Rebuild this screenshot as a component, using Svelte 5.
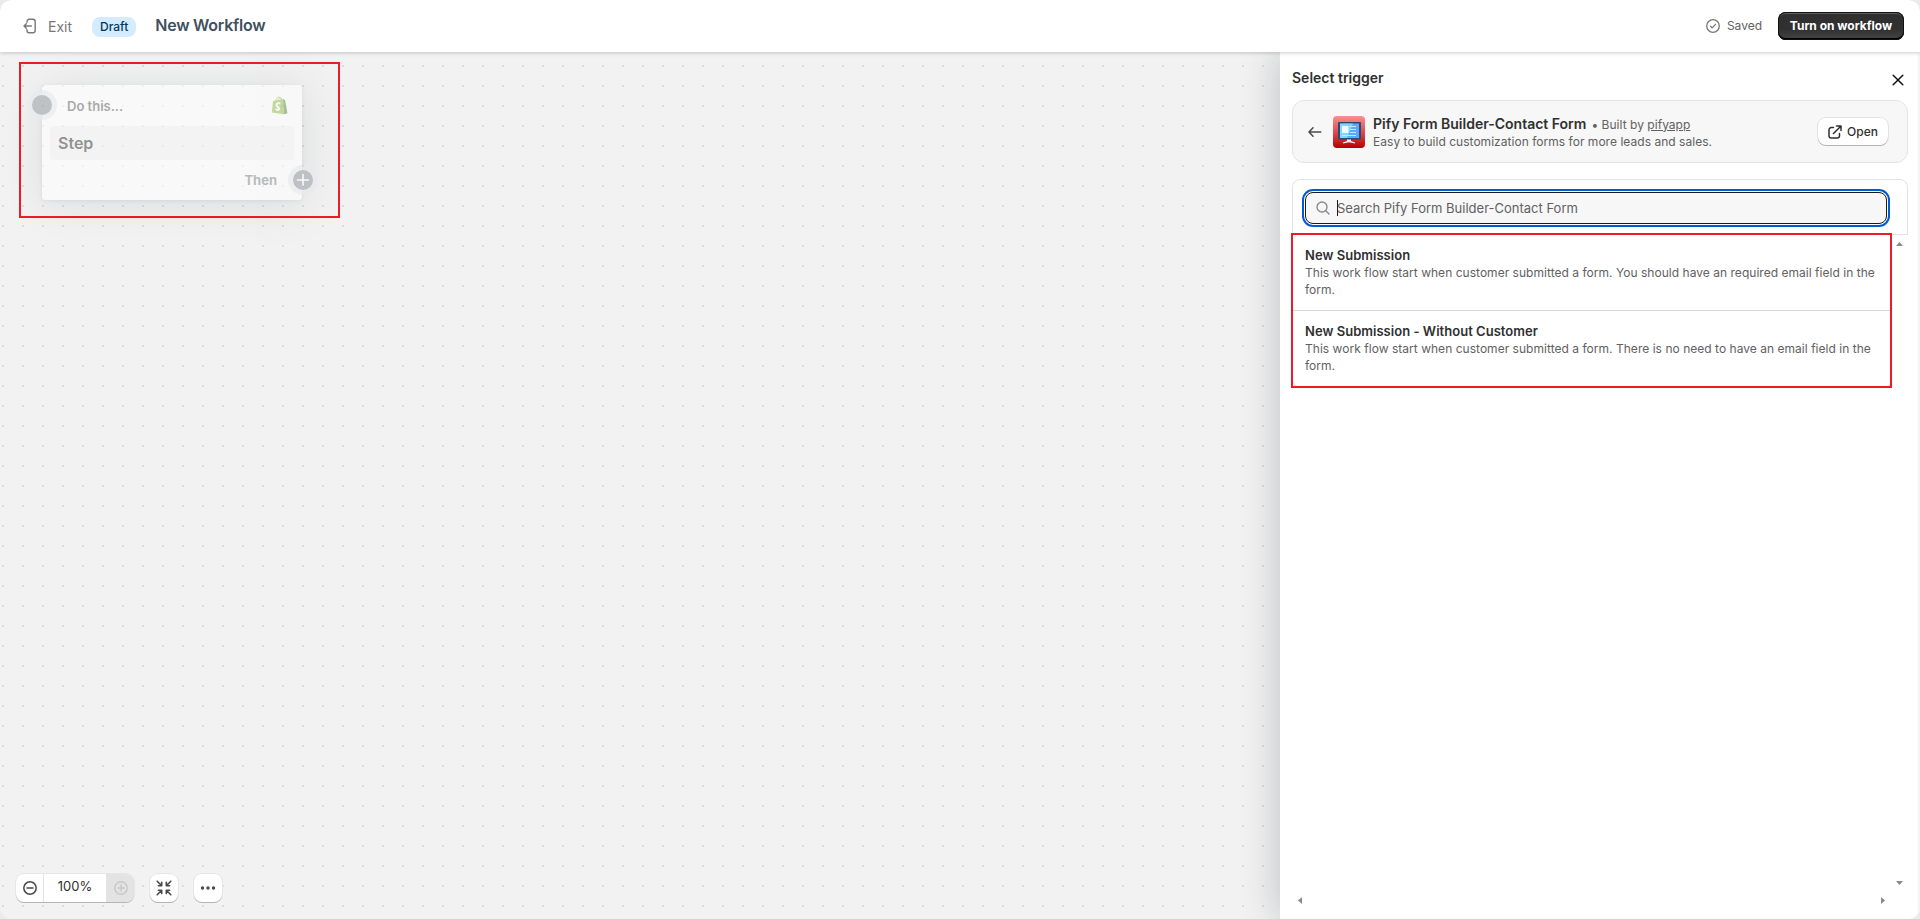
<script lang="ts">
	let zoom = $state(100);
	let query = $state('');

	const app = {
		name: 'Pify Form Builder-Contact Form',
		author: 'pifyapp',
		tagline: 'Easy to build customization forms for more leads and sales.'
	};

	const triggers = [
		{
			title: 'New Submission',
			body: 'This work flow start when customer submitted a form. You should have an required email field in the form.'
		},
		{
			title: 'New Submission - Without Customer',
			body: 'This work flow start when customer submitted a form. There is no need to have an email field in the form.'
		}
	];
</script>

<div class="page">
	<header class="topbar">
		<a class="exit" href="#exit">
			<svg width="14" height="16" viewBox="0 0 14 16" fill="none" stroke="currentColor" stroke-width="1.4" stroke-linecap="round" stroke-linejoin="round">
				<path d="M4 4.2V3.6a2.3 2.3 0 0 1 2.3-2.3h3.6a2.3 2.3 0 0 1 2.3 2.3v8.8a2.3 2.3 0 0 1-2.3 2.3H6.3a2.3 2.3 0 0 1-2.3-2.3v-.6M8.3 8H1M3.3 5.7 1 8l2.3 2.3" />
			</svg>
			<span>Exit</span>
		</a>
		<span class="badge">Draft</span>
		<h1>New Workflow</h1>
		<div class="saved">
			<svg width="14" height="14" viewBox="0 0 14 14" fill="none" stroke="currentColor" stroke-width="1.3" stroke-linecap="round" stroke-linejoin="round">
				<circle cx="7" cy="7" r="6.3" />
				<path d="m4.6 7.3 1.6 1.6 3.3-3.5" />
			</svg>
			<span>Saved</span>
		</div>
		<button class="primary">Turn on workflow</button>
	</header>

	<div class="workspace">
		<main class="canvas">
			<div class="node">
				<span class="port in"></span>
				<div class="node-head">
					<span>Do this...</span>
					<svg width="17" height="19" viewBox="0 0 17 19">
						<path d="m.8 16.6 1.3-11.5 9.9-2.1 1 15.300z" fill="#95bf47" />
						<path d="m12 3 2 .9 2.500 13.400-3.500 1z" fill="#5e8e3e" />
						<path d="M4.500 5.500C5 2.500 6.500.9 8 1c1.400.1 2 1.600 2.100 3.300M7 5c.2-2.300 1.300-3.600 2.500-3.200 1 .3 1.500 1.200 1.700 2" fill="none" stroke="#95bf47" stroke-width=".9" />
						<path d="M9.300 7.600C7.500 6.600 5.300 7.300 5.500 9.200c.2 1.700 2.800 1.800 2.700 3.600-.1 1.600-2.100 1.500-3.600.3" fill="none" stroke="#fff" stroke-width="1.9" />
					</svg>
				</div>
				<div class="node-body">Step</div>
				<div class="node-foot">Then</div>
				<span class="port out">
					<svg width="14" height="14" viewBox="0 0 14 14" stroke="#fff" stroke-width="1.6" stroke-linecap="round">
						<path d="M7 1.500v11M1.500 7h11" />
					</svg>
				</span>
			</div>
			<div class="frame frame-node"></div>

			<div class="tools">
				<div class="zoom">
					<button aria-label="Zoom out" onclick={() => { zoom -= 10; }}>
						<svg width="14" height="14" viewBox="0 0 14 14" fill="none" stroke="currentColor" stroke-width="1.5" stroke-linecap="round">
							<circle cx="7" cy="7" r="6.2" />
							<path d="M4 7h6" />
						</svg>
					</button>
					<span class="level">{zoom}%</span>
					<button class="off" aria-label="Zoom in" disabled={zoom >= 100} onclick={() => { zoom += 10; }}>
						<svg width="14" height="14" viewBox="0 0 14 14" fill="none" stroke="currentColor" stroke-width="1.4" stroke-linecap="round">
							<circle cx="7" cy="7" r="6.2" />
							<path d="M4 7h6M7 4v6" />
						</svg>
					</button>
				</div>
				<button class="tool" aria-label="Fit to screen">
					<svg width="16" height="16" viewBox="0 0 16 16" fill="none" stroke="currentColor" stroke-width="1.6" stroke-linecap="round" stroke-linejoin="round">
						<path d="m1.200 1.200 4 4M5.700 2.400v3.300H2.400M14.800 1.200l-4 4M10.300 2.400v3.300h3.300M1.200 14.800l4-4M5.700 13.600v-3.300H2.400M14.800 14.800l-4-4M10.300 13.600v-3.300h3.300" />
					</svg>
				</button>
				<button class="tool" aria-label="More actions">
					<svg width="16" height="16" viewBox="0 0 16 16" fill="currentColor">
						<circle cx="2.5" cy="8" r="1.7" />
						<circle cx="8" cy="8" r="1.7" />
						<circle cx="13.5" cy="8" r="1.7" />
					</svg>
				</button>
			</div>
		</main>

		<aside class="panel">
			<div class="panel-head">
				<h2>Select trigger</h2>
				<button class="close" aria-label="Close">
					<svg width="12" height="12" viewBox="0 0 12 12" stroke="currentColor" stroke-width="1.5" stroke-linecap="round">
						<path d="m1.200 1.200 9.600 9.600M10.800 1.200l-9.600 9.600" />
					</svg>
				</button>
			</div>

			<section class="app-card">
				<svg class="back" width="14" height="12" viewBox="0 0 14 12" fill="none" stroke="currentColor" stroke-width="1.5" stroke-linecap="round" stroke-linejoin="round">
					<path d="M12.800 6H1.200M5 1.800 1 6l4 4.200" />
				</svg>
				<svg class="logo" width="32" height="32" viewBox="0 0 32 32">
					<defs>
						<linearGradient id="red" x1="0" y1="0" x2="0" y2="1">
							<stop offset="0" stop-color="#f98f8f" />
							<stop offset=".55" stop-color="#d94548" />
							<stop offset="1" stop-color="#b80000" />
						</linearGradient>
					</defs>
					<rect width="32" height="32" rx="4" fill="url(#red)" />
					<rect x="5" y="6" width="23" height="17.5" rx="1" fill="#2f4779" />
					<rect x="7" y="7.5" width="19" height="14.5" fill="#5aa9ff" />
					<path d="M7 7.500h13l-6 14.500H7z" fill="#73dcff" />
					<path d="M9 10h6.500v7H9z" fill="#f4fbff" />
					<path d="M17 10.500h6M17 13.500h6M17 16.500h6M9 19.500h14" stroke="#c4e6ff" stroke-width="1" />
					<path d="M14 23.500h4v1.500l4 1.500v1L16 26.200l-6 1.300v-1l4-1.500z" fill="#e9edf5" />
				</svg>
				<div class="app-text">
					<div class="app-title">
						<strong>{app.name}</strong>
						<span>• Built by <u>{app.author}</u></span>
					</div>
					<p>{app.tagline}</p>
				</div>
				<button class="open">
					<svg width="14" height="14" viewBox="0 0 14 14" fill="none" stroke="currentColor" stroke-width="1.5" stroke-linecap="round" stroke-linejoin="round">
						<path d="M5.500 2.500H3.300A2.300 2.300 0 0 0 1 4.800v5.900A2.300 2.300 0 0 0 3.300 13h5.900a2.300 2.300 0 0 0 2.300-2.300V8.500M8.500 1H13v4.500M13 1 5.500 8.500" />
					</svg>
					<span>Open</span>
				</button>
			</section>

			<section class="search-card">
				<label class="search">
					<svg width="14" height="14" viewBox="0 0 14 14" fill="none" stroke="#8a8a8a" stroke-width="1.4" stroke-linecap="round">
						<circle cx="6" cy="6" r="5" />
						<path d="m9.700 9.700 3.300 3.300" />
					</svg>
					<span class="caret"></span>
					<input type="text" placeholder={`Search ${app.name}`} bind:value={query} />
				</label>
			</section>

			<div class="results">
				<ul class="list">
					{#each triggers as trigger}
						<li>
							<strong>{trigger.title}</strong>
							<p>{trigger.body}</p>
						</li>
					{/each}
				</ul>
				<div class="bar-y">
					<svg width="7" height="4" viewBox="0 0 7 4"><path d="M3.500 0 7 4H0z" /></svg>
					<svg width="7" height="4" viewBox="0 0 7 4"><path d="M0 0h7L3.500 4z" /></svg>
				</div>
			</div>
			<div class="bar-x">
				<svg width="4" height="7" viewBox="0 0 4 7"><path d="M4 0v7L0 3.500z" /></svg>
				<svg width="4" height="7" viewBox="0 0 4 7"><path d="M0 0v7l4-3.500z" /></svg>
			</div>
			<div class="frame frame-list"></div>
		</aside>
	</div>
</div>

<style>
	:global(body) {
		background: #ebebeb;
	}

	.page {
		display: flex;
		flex-direction: column;
		height: 100vh;
		overflow: hidden;
		border-radius: 12px;
		background: #f2f2f2;
		color: #303030;
		font-family: Inter, 'Liberation Sans', sans-serif;
		font-size: 13px;
	}

	.page * {
		box-sizing: border-box;
	}

	h1,
	h2,
	p,
	ul {
		margin: 0;
		padding: 0;
	}

	button {
		display: flex;
		align-items: center;
		justify-content: center;
		padding: 0;
		border: none;
		background: none;
		color: inherit;
		font: inherit;
	}

	svg {
		display: block;
		flex-shrink: 0;
	}

	.topbar {
		position: relative;
		z-index: 2;
		display: flex;
		align-items: center;
		flex-shrink: 0;
		height: 52px;
		padding: 0 16px 0 23px;
		background: #fff;
		box-shadow: 0 1px 4px rgba(0, 0, 0, 0.2);
	}

	.exit {
		display: flex;
		align-items: center;
		gap: 11px;
		width: 69px;
		color: #777;
		font-size: 14px;
		text-decoration: none;
	}

	.exit span {
		padding-top: 1px;
	}

	.badge {
		height: 20px;
		margin-top: 2px;
		padding: 0 8px;
		border-radius: 8px;
		background: #d5ebff;
		color: #003a5a;
		font-size: 12px;
		font-weight: 500;
		line-height: 20px;
	}

	h1 {
		margin: 0 auto 2px 19px;
		color: #414f5e;
		font-size: 16px;
		font-weight: 600;
		letter-spacing: -0.25px;
		line-height: 20px;
	}

	.saved {
		display: flex;
		align-items: center;
		gap: 7px;
		color: #616161;
		font-size: 12px;
	}

	.saved span {
		padding-bottom: 1px;
	}

	.saved svg {
		color: #777;
	}

	.primary {
		width: 126px;
		height: 28px;
		margin-left: 16px;
		padding-bottom: 1px;
		border-radius: 8px;
		background: linear-gradient(#303030 60%, #454545);
		box-shadow: inset 0 0 0 1px #111, inset 0 2px 0 #606060, inset 0 -2px 0 #000;
		color: #fff;
		font-size: 12px;
		font-weight: 700;
	}

	.workspace {
		display: flex;
		flex: 1;
		min-height: 0;
	}

	.canvas {
		position: relative;
		display: flex;
		flex: 1;
		align-items: flex-end;
		background: radial-gradient(circle at 10px 10px, #dcdee0 1px, transparent 1.4px) -7px 4px / 20px 20px #f2f2f2;
	}

	.node {
		position: absolute;
		top: 33px;
		left: 42px;
		width: 260px;
		height: 115px;
		padding: 0 8px;
		border-radius: 3px;
		background: #fff;
		box-shadow: 0 4px 40px rgba(33, 43, 54, 0.22), 0 1px 4px rgba(33, 43, 54, 0.15);
		opacity: 0.5;
	}

	.node-head {
		display: flex;
		align-items: center;
		justify-content: space-between;
		height: 41px;
		padding: 0 6px 0 17px;
		color: #616161;
		font-weight: 600;
	}

	.node-body {
		height: 34px;
		padding-left: 8px;
		border-radius: 4px;
		background: #f4f4f4;
		font-size: 16px;
		font-weight: 600;
		line-height: 35px;
	}

	.node-foot {
		height: 40px;
		padding-right: 17px;
		color: #7f8489;
		font-weight: 700;
		line-height: 41px;
		text-align: right;
	}

	.port {
		position: absolute;
		display: flex;
		align-items: center;
		justify-content: center;
		width: 20px;
		height: 20px;
		border-radius: 50%;
		background: #8c9196;
		box-shadow: 0 0 0 5px rgba(223, 227, 232, 0.7);
	}

	.in {
		top: 10px;
		left: -10px;
	}

	.out {
		top: 85px;
		right: -11px;
	}

	.frame {
		position: absolute;
		border: 2px solid #ed1c24;
		pointer-events: none;
	}

	.frame-node {
		top: 10px;
		left: 19px;
		width: 321px;
		height: 156px;
	}

	.frame-list {
		top: 181px;
		left: 11px;
		width: 601px;
		height: 155px;
	}

	.tools {
		display: flex;
		gap: 16px;
		padding: 0 0 17px 16px;
		color: #4a4a4a;
	}

	.zoom {
		display: flex;
		width: 118px;
		height: 28px;
		overflow: hidden;
		border-radius: 8px;
		background: #fff;
		box-shadow: 0 1px 0 #b5b5b5, 0 0 0 1px #e6e6e6;
	}

	.zoom button {
		width: 27px;
	}

	.zoom .off {
		width: 27px;
		background: #e3e3e3;
		color: #c8c8c8;
	}

	.level {
		flex: 1;
		border: solid #e3e3e3;
		border-width: 0 1px;
		color: #303030;
		font-size: 13px;
		line-height: 25px;
		text-align: center;
	}

	.tool {
		width: 28px;
		height: 28px;
		border-radius: 8px;
		background: #fff;
		box-shadow: 0 1px 0 #b5b5b5, 0 0 0 1px #e6e6e6;
	}

	.panel {
		position: relative;
		z-index: 1;
		display: flex;
		flex-direction: column;
		width: 640px;
		padding: 0 12px;
		background: #fff;
		box-shadow: -2px 0 36px rgba(33, 43, 54, 0.24), inset -2px 0 2px #f3f3f3;
	}

	.panel-head {
		display: flex;
		align-items: center;
		justify-content: space-between;
		height: 48px;
		padding: 4px 4px 0 0;
	}

	h2 {
		font-size: 14px;
		font-weight: 600;
		line-height: 20px;
	}

	.close {
		padding-top: 4px;
		color: #111;
	}

	.app-card {
		display: flex;
		align-items: center;
		height: 63px;
		padding: 0 19px 0 15px;
		border: 1px solid #e3e3e3;
		border-radius: 12px;
		background: #f7f7f7;
	}

	.back {
		color: #4a4a4a;
	}

	.logo {
		margin: 0 8px 0 11px;
	}

	.app-text {
		flex: 1;
		color: #616161;
		font-size: 12px;
		letter-spacing: 0.03px;
		line-height: 17px;
	}

	.app-title {
		display: flex;
		align-items: baseline;
		gap: 5px;
		padding-top: 1px;
		line-height: 17px;
	}

	.app-title strong {
		color: #303030;
		font-size: 14px;
		font-weight: 600;
		letter-spacing: 0;
	}

	.app-title span {
		margin-top: -1px;
	}

	.open {
		gap: 5px;
		width: 70px;
		height: 27px;
		border-radius: 8px;
		background: #fff;
		box-shadow: 0 1px 0 #b5b5b5, 0 0 0 1px #e3e3e3;
		font-size: 12px;
		font-weight: 500;
	}

	.search-card {
		height: 56px;
		margin-top: 16px;
		padding: 12px 20px 0 12px;
		border: 1px solid #e3e3e3;
		border-radius: 8px 8px 0 0;
	}

	.search {
		display: flex;
		align-items: center;
		height: 32px;
		padding: 0 10px;
		border: 1px solid #1a1a1a;
		border-radius: 8px;
		background: #f7f7f7;
		outline: 2px solid #005bd3;
		outline-offset: 1px;
	}

	.caret {
		width: 1px;
		height: 16px;
		margin-left: 7px;
		background: #1a1a1a;
	}

	input {
		flex: 1;
		margin-left: -1px;
		padding: 0;
		border: none;
		outline: none;
		background: none;
		font: inherit;
	}

	input::placeholder {
		color: #616161;
		opacity: 1;
	}

	.results {
		display: flex;
		flex: 1;
		min-height: 0;
	}

	.list {
		width: 600px;
		height: 153px;
		border: solid #e3e3e3;
		border-width: 0 1px 1px;
		border-radius: 0 0 8px 8px;
		list-style: none;
	}

	li {
		height: 76px;
		padding: 12px 12px 0;
		color: #616161;
		font-size: 12px;
		letter-spacing: 0.03px;
		line-height: 17px;
	}

	li:first-child {
		border-bottom: 1px solid #d9d9d9;
	}

	li strong {
		color: #303030;
		font-size: 13px;
		font-weight: 600;
	}

	.bar-y {
		display: flex;
		flex-direction: column;
		justify-content: space-between;
		padding: 7px 0 0 4px;
		fill: #8b8b8b;
	}

	.bar-x {
		display: flex;
		justify-content: space-between;
		height: 34px;
		padding: 12px 23px 0 6px;
		fill: #8b8b8b;
	}
</style>
